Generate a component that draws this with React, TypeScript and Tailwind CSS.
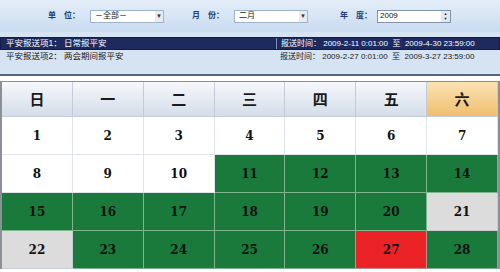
import React from "react"

const cjk = { fontFamily: '"Liberation Sans", "Noto Sans CJK SC", sans-serif' }
const serif = { fontFamily: '"DejaVu Serif", "Liberation Serif", serif' }

type Cell = { day: number; tone: "white" | "green" | "gray" | "red" }

const tones: Record<Cell["tone"], string> = {
  white: "bg-white border-[#dfe3ea]",
  green: "bg-[#197a3c] border-[#7fb58d]",
  gray: "bg-[#dcdcdc] border-[#c9ced6]",
  red: "bg-[#ec2326] border-[#c98a8a]",
}

const weekdays = ["日", "一", "二", "三", "四", "五", "六"]

const cells: Cell[] = Array.from({ length: 28 }, (_, i) => {
  const day = i + 1
  let tone: Cell["tone"] = "white"
  if (day >= 11) tone = "green"
  if (day === 21 || day === 22) tone = "gray"
  if (day === 27) tone = "red"
  return { day, tone }
})

function Select({ value, width }: { value: string; width: string }) {
  return (
    <div className={`flex h-[13px] ${width} items-center justify-between border border-[#9fb3cc] bg-white pl-1 text-[8px] text-[#222]`}>
      <span>{value}</span>
      <span className="flex h-full w-[8px] items-center justify-center bg-[#e6ebf2] text-[6px] text-[#333]">▼</span>
    </div>
  )
}

export default function App() {
  return (
    <div className="h-[272px] w-[500px] overflow-hidden bg-white" style={cjk}>
      {/* toolbar */}
      <div className="flex h-[32px] items-center bg-gradient-to-b from-[#e4eef9] to-[#c9dbef] text-[8px] text-[#1d3b77]">
        <span className="ml-[48px] w-[42px] font-bold">单　位：</span>
        <Select value="－全部－" width="w-[74px]" />
        <span className="ml-[28px] w-[42px] font-bold">月　份：</span>
        <Select value="二月" width="w-[74px]" />
        <span className="ml-[32px] w-[37px] font-bold">年　度：</span>
        <div className="flex h-[13px] w-[74px] items-center justify-between border border-[#7f93ad] bg-white pl-[2px] text-[8px] text-[#111]">
          <span>2009</span>
          <div className="flex h-full w-[9px] flex-col bg-[#e3e8ef] text-[4px] leading-[5px] text-[#333]">
            <span className="flex flex-1 items-center justify-center">▲</span>
            <span className="flex flex-1 items-center justify-center">▼</span>
          </div>
        </div>
      </div>

      {/* schedule panel */}
      <div className="h-[44px] border-b-2 border-[#55667f] bg-[#d6e3f2] pt-[5px] text-[8.5px]">
        <div className="flex h-[13px] items-center border border-[#121c4a] bg-[#1e2a5e] text-white">
          <span className="w-[275px] pl-[5px]">平安报送项1：&nbsp;日常报平安</span>
          <span className="h-full border-l border-[#7d8bb5] pl-[4px] text-[8px] leading-[12px]">报送时间：&nbsp;2009-2-11 0:01:00&nbsp;&nbsp;至&nbsp;&nbsp;2009-4-30 23:59:00</span>
        </div>
        <div className="flex h-[13px] items-center text-[#1a1a1a]">
          <span className="w-[275px] pl-[6px]">平安报送项2：&nbsp;两会期间报平安</span>
          <span className="pl-[5px] text-[8px]">报送时间：&nbsp;2009-2-27 0:01:00&nbsp;&nbsp;至&nbsp;&nbsp;2009-3-27 23:59:00</span>
        </div>
      </div>

      {/* calendar */}
      <div className="mt-[5px] grid grid-cols-7 border-t border-l-2 border-r-2 border-[#8a8f98]">
        {weekdays.map((w, i) => (
          <div
            key={w}
            className={`flex h-[35px] items-center justify-center border-r border-b border-[#c3ccd8] text-[15px] font-bold text-[#1a1a1a] ${
              i === 6 ? "bg-gradient-to-b from-[#fbe3b4] to-[#efbe6c]" : "bg-gradient-to-b from-[#f6f8fb] to-[#d4dde9]"
            }`}
            style={{ fontFamily: '"Noto Sans CJK SC", sans-serif' }}
          >
            {w}
          </div>
        ))}
        {cells.map((c) => (
          <div
            key={c.day}
            className={`flex h-[38px] items-center justify-center border-r border-b text-[12px] font-bold text-[#111] ${tones[c.tone]}`}
            style={serif}
          >
            {c.day}
          </div>
        ))}
      </div>
    </div>
  )
}
